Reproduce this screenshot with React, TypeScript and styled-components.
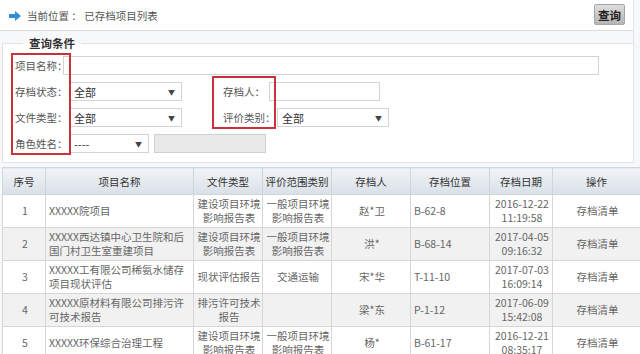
import styled, { createGlobalStyle } from "styled-components";

const GlobalStyle = createGlobalStyle`
  html, body {
    margin: 0;
    padding: 0;
    background: #f7f8fa;
    font-family: "Noto Sans CJK SC", "Noto Sans", sans-serif;
    color: #666;
  }
`;

type Row = {
  no: number;
  name: string;
  fileType: string;
  scope: string;
  person: string;
  place: string;
  date: string;
  time: string;
};

const rows: Row[] = [
  { no: 1, name: "XXXXX院项目", fileType: "建设项目环境影响报告表", scope: "一般项目环境影响报告表", person: "赵*卫", place: "B-62-8", date: "2016-12-22", time: "11:19:58" },
  { no: 2, name: "XXXXX西达镇中心卫生院和后国门村卫生室重建项目", fileType: "建设项目环境影响报告表", scope: "一般项目环境影响报告表", person: "洪*", place: "B-68-14", date: "2017-04-05", time: "09:16:32" },
  { no: 3, name: "XXXXX工有限公司稀氨水储存项目现状评估", fileType: "现状评估报告", scope: "交通运输", person: "宋*华", place: "T-11-10", date: "2017-07-03", time: "16:09:14" },
  { no: 4, name: "XXXXX原材料有限公司排污许可技术报告", fileType: "排污许可技术报告", scope: "", person: "梁*东", place: "P-1-12", date: "2017-06-09", time: "15:42:08" },
  { no: 5, name: "XXXXX环保综合治理工程", fileType: "建设项目环境影响报告表", scope: "一般项目环境影响报告表", person: "杨*", place: "B-61-17", date: "2016-12-21", time: "08:35:17" },
];

const columns = [
  { title: "序号", width: 43 },
  { title: "项目名称", width: 148 },
  { title: "文件类型", width: 69 },
  { title: "评价范围类别", width: 69 },
  { title: "存档人", width: 79 },
  { title: "存档位置", width: 79 },
  { title: "存档日期", width: 63 },
  { title: "操作", width: 88 },
];

function ArrowIcon() {
  return (
    <svg width="12" height="10" viewBox="0 0 12 10">
      <polygon points="0,3 6,3 6,0 12,5 6,10 6,7 0,7" fill="#2f8fd6" />
    </svg>
  );
}

function Select({ value, width }: { value: string; width: number }) {
  return (
    <SelectBox $w={width}>
      <span>{value}</span>
      <Caret>▼</Caret>
    </SelectBox>
  );
}

export default function App() {
  return (
    <Page>
      <GlobalStyle />
      <Panel>
        <TopBar>
          <Crumb>
            <ArrowIcon />
            <span>当前位置 ： 已存档项目列表</span>
          </Crumb>
          <QueryButton>查询</QueryButton>
        </TopBar>

        <Conditions>
          <Legend>查询条件</Legend>
          <FormRow>
            <Label $w={48}>项目名称：</Label>
            <TextInput $w={536} />
          </FormRow>
          <FormRow>
            <Label>存档状态：</Label>
            <Select value="全部" width={113} />
            <Label $ml={41} $w={46}>存档人：</Label>
            <TextInput $w={111} />
          </FormRow>
          <FormRow>
            <Label>文件类型：</Label>
            <Select value="全部" width={113} />
            <Label $ml={41}>评价类别：</Label>
            <Select value="全部" width={112} />
          </FormRow>
          <FormRow>
            <Label>角色姓名：</Label>
            <Select value="----" width={80} />
            <DisabledBox />
          </FormRow>
          {/* red annotation frames drawn over the form */}
          <Mark style={{ left: 8, top: 3, width: 56, height: 98 }} />
          <Mark style={{ left: 209, top: 26, width: 60, height: 49 }} />
        </Conditions>
      </Panel>

      <Table>
        <colgroup>
          {columns.map((c) => (
            <col key={c.title} style={{ width: c.width }} />
          ))}
        </colgroup>
        <thead>
          <tr>
            {columns.map((c) => (
              <Th key={c.title}>{c.title}</Th>
            ))}
          </tr>
        </thead>
        <tbody>
          {rows.map((r) => (
            <Tr key={r.no} $alt={r.no % 2 === 0}>
              <Td>{r.no}</Td>
              <Td $left>{r.name}</Td>
              <Td>{r.fileType}</Td>
              <Td>{r.scope}</Td>
              <Td>{r.person}</Td>
              <Td $left>{r.place}</Td>
              <Td>
                {r.date}
                <br />
                {r.time}
              </Td>
              <Td>存档清单</Td>
            </Tr>
          ))}
        </tbody>
      </Table>
    </Page>
  );
}

const Page = styled.div`
  width: 640px;
  height: 354px;
  overflow: hidden;
`;

const Panel = styled.div`
  width: 633px;
  border-right: 1px solid #e2e4e8;
`;

const TopBar = styled.div`
  height: 31px;
  box-sizing: border-box;
  background: #fff;
  border-bottom: 1px solid #d9dce0;
  display: flex;
  align-items: center;
  justify-content: space-between;
  padding: 0 8px 0 9px;
  margin-bottom: 5px;
`;

const Crumb = styled.div`
  display: flex;
  align-items: center;
  gap: 6px;
  font-size: 10.5px;
  color: #555;
  padding-top: 1px;
`;

const QueryButton = styled.button`
  width: 31px;
  height: 21px;
  padding: 0;
  margin-top: -1px;
  font-family: inherit;
  font-size: 11.5px;
  font-weight: bold;
  color: #222;
  border: 1px solid #a6a6a6;
  border-radius: 2px;
  background: linear-gradient(#dedede, #b5b5b5);
`;

const Conditions = styled.fieldset`
  position: relative;
  margin: 0 0 0 2px;
  padding: 6px 0 6px 12px;
  height: 127px;
  box-sizing: border-box;
  background: #fff;
  border: 1px solid #e0e2e6;
  border-right: none;
  display: flex;
  flex-direction: column;
  gap: 7px;
`;

const Legend = styled.legend`
  margin-left: 8px;
  padding: 0 6px;
  font-size: 11.5px;
  font-weight: bold;
  color: #333;
  line-height: 14px;
`;

const FormRow = styled.div`
  display: flex;
  align-items: center;
  height: 19px;
`;

const Label = styled.span<{ $ml?: number; $w?: number }>`
  flex-shrink: 0;
  font-size: 10.5px;
  color: #555;
  margin-left: ${(p) => p.$ml ?? 0}px;
  width: ${(p) => p.$w ?? 54}px;
  white-space: nowrap;
`;

const TextInput = styled.div<{ $w: number }>`
  width: ${(p) => p.$w}px;
  height: 19px;
  box-sizing: border-box;
  border: 1px solid #d4d4d4;
  background: #fff;
`;

const SelectBox = styled.div<{ $w: number }>`
  width: ${(p) => p.$w}px;
  height: 19px;
  box-sizing: border-box;
  border: 1px solid #d4d4d4;
  background: #fff;
  display: flex;
  align-items: center;
  justify-content: space-between;
  padding: 0 6px 0 4px;
  font-size: 11px;
  color: #333;
`;

const Caret = styled.span`
  font-size: 7px;
  color: #444;
`;

const DisabledBox = styled.div`
  width: 112px;
  height: 19px;
  box-sizing: border-box;
  margin-left: 5px;
  border: 1px solid #d0d0d0;
  background: #e8e8e8;
`;

const Mark = styled.div`
  position: absolute;
  border: 2px solid #c8323a;
  pointer-events: none;
`;

const Table = styled.table`
  margin: 4px 0 0 2px;
  width: 638px;
  table-layout: fixed;
  border-collapse: collapse;
  font-size: 10.5px;
`;

const Th = styled.th`
  height: 26px;
  padding: 0;
  font-weight: normal;
  color: #333;
  font-size: 10.5px;
  white-space: nowrap;
  border: 1px solid #cfd5dc;
  background: linear-gradient(#f1f4f7, #d9e0e7);
`;

const Tr = styled.tr<{ $alt: boolean }>`
  height: 33px;
  background: ${(p) => (p.$alt ? "#f1f1f1" : "#fff")};
`;

const Td = styled.td<{ $left?: boolean }>`
  padding: 0 1px 0 3px;
  border: 1px solid #d6d6d6;
  color: #666;
  line-height: 14px;
  text-align: ${(p) => (p.$left ? "left" : "center")};
  word-break: break-all;
`;
